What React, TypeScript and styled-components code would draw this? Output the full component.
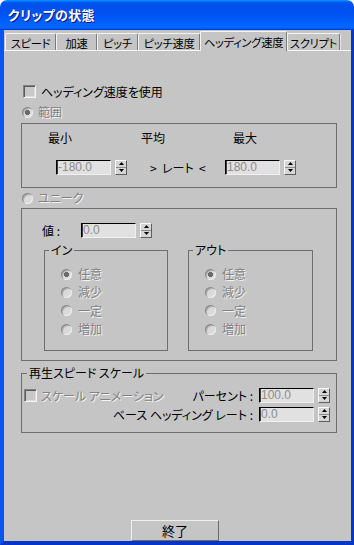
import styled, { createGlobalStyle } from "styled-components";

const GlobalStyle = createGlobalStyle`
  body {
    margin: 0;
    background: #ffffff;
  }
  * {
    box-sizing: border-box;
  }
`;

const FONT = `"Noto Sans CJK JP", "Noto Sans", sans-serif`;

const Window = styled.div`
  width: 354px;
  height: 545px;
  display: flex;
  flex-direction: column;
  font-family: ${FONT};
  font-size: 12px;
  font-feature-settings: "palt";
  color: #000;
`;

const TitleBar = styled.div`
  height: 30px;
  flex-shrink: 0;
  display: flex;
  align-items: center;
  padding: 0 8px 1px;
  border-radius: 7px 7px 0 0;
  background: linear-gradient(
    180deg,
    #0997ff 0%,
    #0053ee 9%,
    #0050ee 40%,
    #0066ff 86%,
    #0066ff 92%,
    #005bff 95%,
    #003dd7 97%,
    #003dd7 100%
  );
`;

const Title = styled.span`
  color: #fff;
  font-weight: bold;
  font-size: 13px;
  letter-spacing: 0.3px;
  text-shadow: 1px 1px 0 #0f1089;
`;

const Frame = styled.div`
  flex: 1;
  display: flex;
  flex-direction: column;
  background: #c5c5c5;
  border-style: solid;
  border-width: 0 3px 4px 4px;
  border-color: #0a4fe4 #0735c8 #0735c8 #0a55ea;
`;

const TabStrip = styled.div`
  height: 21px;
  display: flex;
  align-items: flex-end;
  padding-left: 1px;
  border-bottom: 1px solid #f4f4f4;
`;

const Tab = styled.div<{ $w: number; $active?: boolean }>`
  width: ${(p) => p.$w}px;
  height: ${(p) => (p.$active ? 20 : 17)}px;
  margin-bottom: ${(p) => (p.$active ? -1 : 0)}px;
  display: flex;
  align-items: center;
  justify-content: center;
  background: #c5c5c5;
  border-top: 1px solid #f4f4f4;
  border-left: 1px solid #f4f4f4;
  border-right: 1px solid #7a7a7a;
  border-radius: 2px 2px 0 0;
  box-shadow: 1px 0 0 #e6e6e6;
  font-size: 11.3px;
  letter-spacing: -0.3px;
  line-height: 14px;
  white-space: nowrap;
  overflow: hidden;
  padding-top: ${(p) => (p.$active ? 0 : 1)}px;
`;

const Content = styled.div`
  flex: 1;
  display: flex;
  flex-direction: column;
  padding: 34px 14px 0 17px;
`;

const Row = styled.div<{ $gap?: number }>`
  display: flex;
  align-items: center;
  gap: ${(p) => p.$gap ?? 0}px;
`;

const Label = styled.span<{ $disabled?: boolean; $w?: number }>`
  line-height: 12px;
  white-space: nowrap;
  ${(p) => (p.$w ? `width: ${p.$w}px;` : "")}
  color: ${(p) => (p.$disabled ? "#828282" : "#000")};
  text-shadow: ${(p) => (p.$disabled ? "1px 1px 0 #f4f4f4" : "none")};
`;

const CheckBox = styled.span`
  width: 13px;
  height: 13px;
  flex-shrink: 0;
  background: #c8c8c8;
  border-top: 1px solid #808080;
  border-left: 1px solid #808080;
  border-right: 1px solid #f4f4f4;
  border-bottom: 1px solid #f4f4f4;
  box-shadow: inset 1px 1px 0 #5a5a5a, inset -1px -1px 0 #dcdcdc;
`;

const Radio = styled.span<{ $checked?: boolean }>`
  width: 11px;
  height: 11px;
  flex-shrink: 0;
  border-radius: 50%;
  background: ${(p) =>
    p.$checked
      ? "radial-gradient(circle, #6a6a6a 0 2.3px, #dadada 2.6px)"
      : "#dadada"};
  box-shadow: inset 1px 1px 0 #8a8a8a, inset 2px 2px 0 #b4b4b4,
    inset -1px -1px 0 #ededed;
`;

const RadioRow = styled(Row)`
  height: 12px;
  margin-left: 1px;
  gap: 5px;
`;

const Box = styled.div<{ $h: number }>`
  height: ${(p) => p.$h}px;
  border: 1px solid #6e6e6e;
  display: flex;
  flex-direction: column;
`;

const Edit = styled.div<{ $w?: number }>`
  width: ${(p) => p.$w ?? 55}px;
  height: 15px;
  flex-shrink: 0;
  background: #e1e1e1;
  border-top: 1px solid #000;
  border-left: 1px solid #000;
  border-right: 1px solid #f0f0f0;
  border-bottom: 1px solid #f0f0f0;
  box-shadow: inset 1px 0 0 #3c3c3c;
  color: #8c8c8c;
  font-family: "Liberation Sans", Arial, sans-serif;
  font-size: 12px;
  line-height: 13px;
  padding-left: 1px;
  overflow: hidden;
`;

const SpinWrap = styled.div`
  width: 12px;
  height: 15px;
  flex-shrink: 0;
  display: grid;
  grid-template-rows: 1fr 1fr;
  background: #d6d6d6;
  border-top: 1px solid #f8f8f8;
  border-left: 1px solid #f8f8f8;
  border-right: 1px solid #5e5e5e;
  border-bottom: 1px solid #5e5e5e;
`;

const SpinHalf = styled.div<{ $top?: boolean }>`
  display: flex;
  align-items: center;
  justify-content: center;
  border-bottom: ${(p) => (p.$top ? "1px solid #8a8a8a" : "none")};
`;

function Spinner() {
  return (
    <SpinWrap>
      <SpinHalf $top>
        <svg width="5" height="3" viewBox="0 0 5 3">
          <path d="M2.5 0 L5 3 L0 3 Z" fill="#000" />
        </svg>
      </SpinHalf>
      <SpinHalf>
        <svg width="5" height="3" viewBox="0 0 5 3">
          <path d="M0 0 L5 0 L2.5 3 Z" fill="#000" />
        </svg>
      </SpinHalf>
    </SpinWrap>
  );
}

function NumField({ value, w }: { value: string; w?: number }) {
  return (
    <Row $gap={4}>
      <Edit $w={w}>{value}</Edit>
      <Spinner />
    </Row>
  );
}

const HeadRow = styled(Row)`
  padding: 8px 0 0 26px;
`;

const HeadCell = styled.span<{ $w: number }>`
  width: ${(p) => p.$w}px;
  line-height: 12px;
`;

const FieldRow = styled(Row)`
  margin-top: 16px;
  padding-left: 34px;
`;

const Rate = styled.span`
  width: 98px;
  padding-left: 23px;
  line-height: 12px;
  white-space: pre;
`;

const Group = styled.fieldset<{ $w: number; $h: number }>`
  width: ${(p) => p.$w}px;
  height: ${(p) => p.$h}px;
  margin: 0;
  padding: 0;
  min-width: 0;
  border: 1px solid #6e6e6e;
`;

const Legend = styled.legend<{ $ml: number }>`
  margin-left: ${(p) => p.$ml}px;
  padding: 0 2px;
  line-height: 12px;
  font-size: 12px;
`;

const GroupList = styled.div`
  display: flex;
  flex-direction: column;
  padding: 9px 0 0 16px;
`;

const ListItem = styled(Row)`
  height: 18.3px;
  gap: 6px;
`;

const InOutRow = styled(Row)`
  align-items: flex-start;
  margin-top: 6px;
  padding-left: 22px;
  gap: 20px;
`;

const ScaleBody = styled.div`
  display: flex;
  flex-direction: column;
  gap: 4px;
  padding: 9px 6px 9px 2px;
`;

const ScaleRow = styled(Row)`
  justify-content: space-between;
  height: 15px;
`;

const RightField = styled(Row)`
  margin-left: auto;
  gap: 6px;
`;

const Button = styled.div`
  margin-top: auto;
  margin-left: 110px;
  width: 88px;
  height: 21px;
  display: flex;
  align-items: center;
  justify-content: center;
  background: #c5c5c5;
  border-top: 1px solid #f0f0f0;
  border-left: 1px solid #f0f0f0;
  border-right: 1px solid #6a6a6a;
  border-bottom: 1px solid #6a6a6a;
  font-size: 13px;
  line-height: 13px;
`;

const tabs: [string, number][] = [
  ["スピード", 51],
  ["加速", 41],
  ["ピッチ", 41],
  ["ピッチ速度", 62],
  ["ヘッディング速度", 87],
  ["スクリプト", 53],
];

const choices = ["任意", "減少", "一定", "増加"];

function ChoiceGroup({ title, w }: { title: string; w: number }) {
  return (
    <Group $w={w} $h={107}>
      <Legend $ml={4}>{title}</Legend>
      <GroupList>
        {choices.map((c, i) => (
          <ListItem key={c}>
            <Radio $checked={i === 0} />
            <Label $disabled>{c}</Label>
          </ListItem>
        ))}
      </GroupList>
    </Group>
  );
}

export default function App() {
  return (
    <Window>
      <GlobalStyle />
      <TitleBar>
        <Title>クリップの状態</Title>
      </TitleBar>
      <Frame>
        <TabStrip>
          {tabs.map(([t, w]) => (
            <Tab key={t} $w={w} $active={t === "ヘッディング速度"}>
              {t}
            </Tab>
          ))}
        </TabStrip>
        <Content>
          <Row $gap={5} style={{ marginLeft: 2 }}>
            <CheckBox />
            <Label>ヘッディング速度を使用</Label>
          </Row>

          <RadioRow style={{ marginTop: 8 }}>
            <Radio $checked />
            <Label $disabled>範囲</Label>
          </RadioRow>
          <Box $h={65} style={{ marginTop: 5 }}>
            <HeadRow>
              <HeadCell $w={93}>最小</HeadCell>
              <HeadCell $w={92}>平均</HeadCell>
              <HeadCell $w={40}>最大</HeadCell>
            </HeadRow>
            <FieldRow>
              <NumField value="-180.0" />
              <Rate>{">  レート  <"}</Rate>
              <NumField value="180.0" />
            </FieldRow>
          </Box>

          <RadioRow style={{ marginTop: 4 }}>
            <Radio />
            <Label $disabled>ユニーク</Label>
          </RadioRow>
          <Box $h={153} style={{ marginTop: 4 }}>
            <Row style={{ marginTop: 14, paddingLeft: 20 }}>
              <Label $w={39}>値 :</Label>
              <NumField value="0.0" />
            </Row>
            <InOutRow>
              <ChoiceGroup title="イン" w={124} />
              <ChoiceGroup title="アウト" w={125} />
            </InOutRow>
          </Box>

          <Group $w={316} $h={66} style={{ marginTop: 6 }}>
            <Legend $ml={5}>再生スピード スケール</Legend>
            <ScaleBody>
              <ScaleRow>
                <Row $gap={4}>
                  <CheckBox />
                  <Label $disabled>スケール アニメーション</Label>
                </Row>
                <RightField>
                  <Label>パーセント :</Label>
                  <NumField value="100.0" />
                </RightField>
              </ScaleRow>
              <ScaleRow>
                <RightField>
                  <Label>ベース ヘッディング レート :</Label>
                  <NumField value="0.0" />
                </RightField>
              </ScaleRow>
            </ScaleBody>
          </Group>

          <Button>終了</Button>
        </Content>
      </Frame>
    </Window>
  );
}
